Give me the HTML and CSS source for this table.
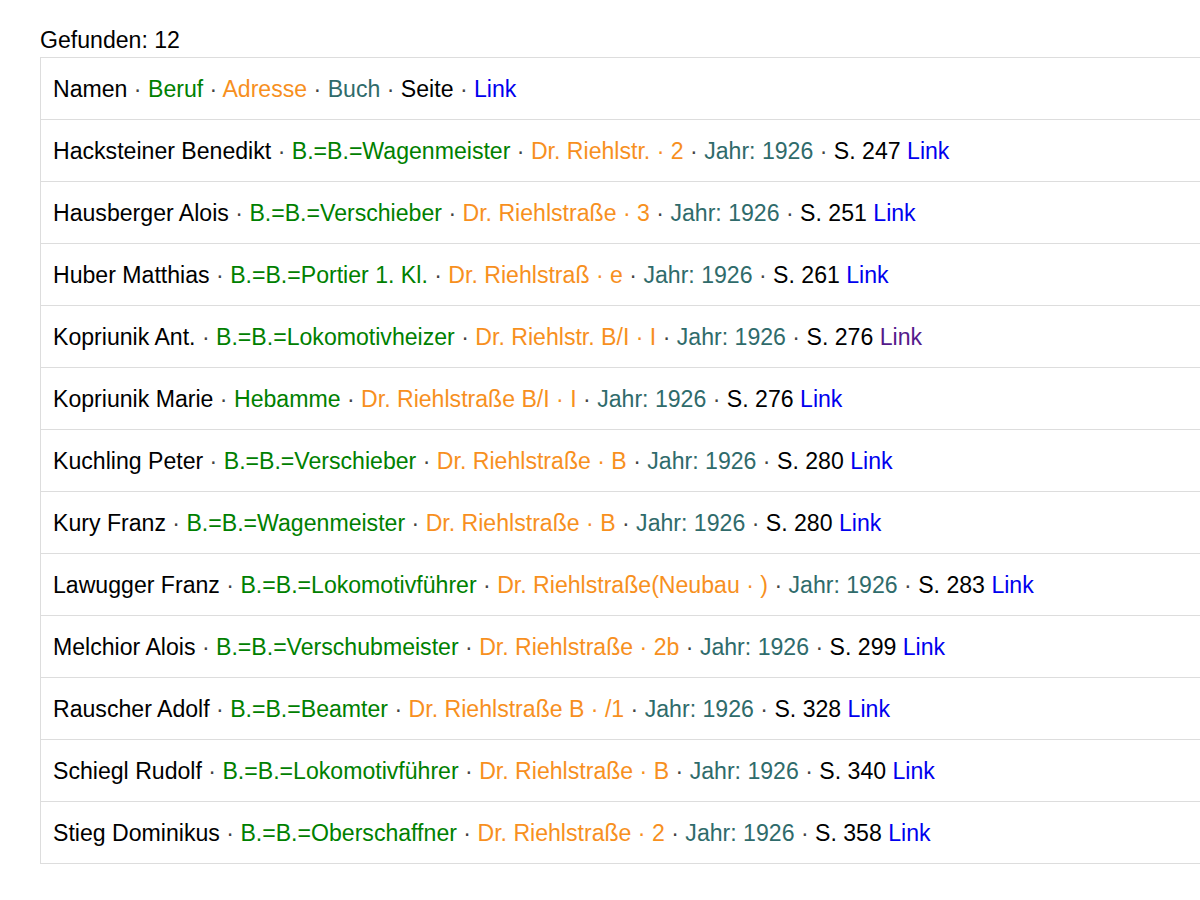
FILE: index.html
```html
<!DOCTYPE html>
<html lang="de">
<head>
<meta charset="utf-8">
<title>Gefunden</title>
<link rel="stylesheet" href="styles.css">
</head>
<body>
<div class="page">
  <div class="count">Gefunden: 12</div>
  <ul class="results">
    <li class="row"><span class="name">Namen</span><span class="sep"> · </span><span class="job">Beruf</span><span class="sep"> · </span><span class="addr">Adresse</span><span class="sep"> · </span><span class="book">Buch</span><span class="sep"> · </span><span class="page-no">Seite</span><span class="sep"> · </span><a class="link" href="#">Link</a></li>
    <li class="row"><span class="name">Hacksteiner Benedikt</span><span class="sep"> · </span><span class="job">B.=B.=Wagenmeister</span><span class="sep"> · </span><span class="addr">Dr. Riehlstr. · 2</span><span class="sep"> · </span><span class="book">Jahr: 1926</span><span class="sep"> · </span><span class="page-no">S. 247</span> <a class="link" href="#">Link</a></li>
    <li class="row"><span class="name">Hausberger Alois</span><span class="sep"> · </span><span class="job">B.=B.=Verschieber</span><span class="sep"> · </span><span class="addr">Dr. Riehlstraße · 3</span><span class="sep"> · </span><span class="book">Jahr: 1926</span><span class="sep"> · </span><span class="page-no">S. 251</span> <a class="link" href="#">Link</a></li>
    <li class="row"><span class="name">Huber Matthias</span><span class="sep"> · </span><span class="job">B.=B.=Portier 1. Kl.</span><span class="sep"> · </span><span class="addr">Dr. Riehlstraß · e</span><span class="sep"> · </span><span class="book">Jahr: 1926</span><span class="sep"> · </span><span class="page-no">S. 261</span> <a class="link" href="#">Link</a></li>
    <li class="row"><span class="name">Kopriunik Ant.</span><span class="sep"> · </span><span class="job">B.=B.=Lokomotivheizer</span><span class="sep"> · </span><span class="addr">Dr. Riehlstr. B/I · I</span><span class="sep"> · </span><span class="book">Jahr: 1926</span><span class="sep"> · </span><span class="page-no">S. 276</span> <a class="link visited" href="#">Link</a></li>
    <li class="row"><span class="name">Kopriunik Marie</span><span class="sep"> · </span><span class="job">Hebamme</span><span class="sep"> · </span><span class="addr">Dr. Riehlstraße B/I · I</span><span class="sep"> · </span><span class="book">Jahr: 1926</span><span class="sep"> · </span><span class="page-no">S. 276</span> <a class="link" href="#">Link</a></li>
    <li class="row"><span class="name">Kuchling Peter</span><span class="sep"> · </span><span class="job">B.=B.=Verschieber</span><span class="sep"> · </span><span class="addr">Dr. Riehlstraße · B</span><span class="sep"> · </span><span class="book">Jahr: 1926</span><span class="sep"> · </span><span class="page-no">S. 280</span> <a class="link" href="#">Link</a></li>
    <li class="row"><span class="name">Kury Franz</span><span class="sep"> · </span><span class="job">B.=B.=Wagenmeister</span><span class="sep"> · </span><span class="addr">Dr. Riehlstraße · B</span><span class="sep"> · </span><span class="book">Jahr: 1926</span><span class="sep"> · </span><span class="page-no">S. 280</span> <a class="link" href="#">Link</a></li>
    <li class="row"><span class="name">Lawugger Franz</span><span class="sep"> · </span><span class="job">B.=B.=Lokomotivführer</span><span class="sep"> · </span><span class="addr">Dr. Riehlstraße(Neubau · )</span><span class="sep"> · </span><span class="book">Jahr: 1926</span><span class="sep"> · </span><span class="page-no">S. 283</span> <a class="link" href="#">Link</a></li>
    <li class="row"><span class="name">Melchior Alois</span><span class="sep"> · </span><span class="job">B.=B.=Verschubmeister</span><span class="sep"> · </span><span class="addr">Dr. Riehlstraße · 2b</span><span class="sep"> · </span><span class="book">Jahr: 1926</span><span class="sep"> · </span><span class="page-no">S. 299</span> <a class="link" href="#">Link</a></li>
    <li class="row"><span class="name">Rauscher Adolf</span><span class="sep"> · </span><span class="job">B.=B.=Beamter</span><span class="sep"> · </span><span class="addr">Dr. Riehlstraße B · /1</span><span class="sep"> · </span><span class="book">Jahr: 1926</span><span class="sep"> · </span><span class="page-no">S. 328</span> <a class="link" href="#">Link</a></li>
    <li class="row"><span class="name">Schiegl Rudolf</span><span class="sep"> · </span><span class="job">B.=B.=Lokomotivführer</span><span class="sep"> · </span><span class="addr">Dr. Riehlstraße · B</span><span class="sep"> · </span><span class="book">Jahr: 1926</span><span class="sep"> · </span><span class="page-no">S. 340</span> <a class="link" href="#">Link</a></li>
    <li class="row"><span class="name">Stieg Dominikus</span><span class="sep"> · </span><span class="job">B.=B.=Oberschaffner</span><span class="sep"> · </span><span class="addr">Dr. Riehlstraße · 2</span><span class="sep"> · </span><span class="book">Jahr: 1926</span><span class="sep"> · </span><span class="page-no">S. 358</span> <a class="link" href="#">Link</a></li>
  </ul>
</div>
</body>
</html>
```
FILE: styles.css
```css
html, body {
  margin: 0;
  padding: 0;
  background: #ffffff;
  overflow: hidden;
}

body {
  font-family: "Liberation Sans", Arial, sans-serif;
  font-size: 23.1px;
  color: #000000;
}

.page {
  padding: 27px 0 0 40px;
}

.count {
  line-height: 27px;
  margin-bottom: 3px;
}

.results {
  list-style: none;
  margin: 0;
  padding: 0;
  width: 1200px;
  border: 1px solid #dddddd;
}

.row {
  padding: 16px 12px 15px;
  line-height: 30px;
  border-bottom: 1px solid #dddddd;
  white-space: nowrap;
}

.row:last-child {
  border-bottom: none;
}

.sep {
  color: #444444;
}

.name,
.page-no {
  color: #000000;
}

.job {
  color: #008000;
}

.addr {
  color: #f7901e;
}

.book {
  color: #2f6b6b;
}

.link {
  color: #0000ee;
  text-decoration: none;
}

.link.visited {
  color: #551a8b;
}
```
